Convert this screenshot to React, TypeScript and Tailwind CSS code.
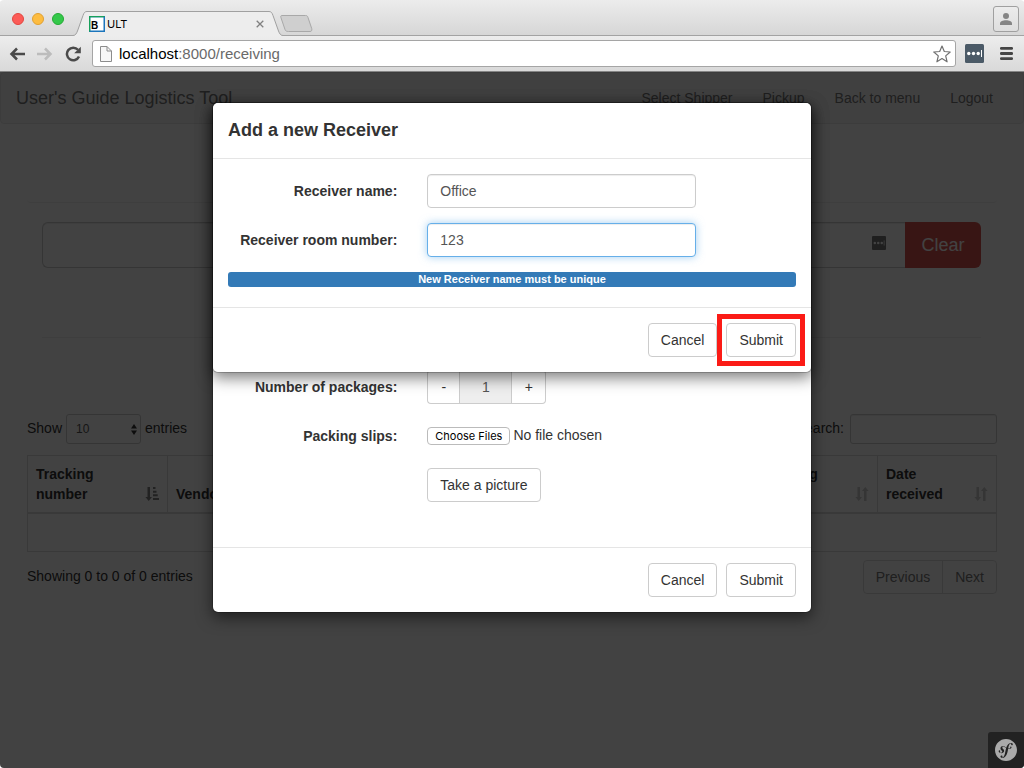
import type { ReactNode } from "react";
import { SiSymfony } from "react-icons/si";

const buttonClass =
  "h-[34px] rounded border border-[#ccc] bg-white px-3 text-sm leading-5 text-[#333] whitespace-nowrap";
const inputClass =
  "h-[34px] w-full rounded border bg-white px-3 text-sm text-[#555] outline-none";

function PasswordIcon({ className }: { className: string }) {
  return (
    <svg viewBox="0 0 19 19" className={className} aria-hidden="true">
      <rect width="19" height="19" rx="1.5" fill="currentColor" />
      <circle cx="3.8" cy="9.5" r="1.7" fill="#fff" />
      <circle cx="8.5" cy="9.5" r="1.7" fill="#fff" />
      <circle cx="13.2" cy="9.5" r="1.7" fill="#fff" />
      <path d="M16.500 6v7" stroke="#fff" strokeWidth="1" />
    </svg>
  );
}

function TabStrip() {
  return (
    <div className="flex h-9 items-end rounded-t bg-linear-to-b from-[#ececec] to-[#d6d6d6] shadow-[inset_0_-1px_0_#a3a3a3]">
      <div className="flex h-9 w-[73px] items-center gap-2 pl-3 pt-[2px]">
        <span className="size-3 rounded-full border border-[#e2463f] bg-[#fc5b57]" />
        <span className="size-3 rounded-full border border-[#e0a032] bg-[#fdbc40]" />
        <span className="size-3 rounded-full border border-[#24a934] bg-[#34c84a]" />
      </div>
      <div className="flex h-[25px] items-stretch">
        <svg viewBox="0 0 14 25" className="h-[25px] w-[14px]" aria-hidden="true">
          <path d="M0 24.500C2.500 24.500 3.500 22.500 4.500 20L10 4.500C11 1.500 12 .5 14 .5V25H0Z" fill="#ededed" />
          <path d="M0 24.500C2.500 24.500 3.500 22.500 4.500 20L10 4.500C11 1.500 12 .5 14 .5" fill="none" stroke="#a0a0a0" />
        </svg>
        <div className="flex w-[182px] items-center border-t border-[#a0a0a0] bg-[#ededed] pl-[2px]">
          <svg viewBox="0 0 16 16" className="size-4" aria-hidden="true">
            <rect width="16" height="16" fill="#1b75bc" />
            <path d="M0 0h16L14.500 1.500H1.500V14.500L0 16Z" fill="#17a05a" />
            <rect x="1.500" y="1.500" width="13" height="13" fill="#fff" />
            <text x="2" y="13" fontSize="10" fontWeight="bold" fontFamily="Liberation Sans, sans-serif">B</text>
          </svg>
          <span className="ml-[2px] font-[Inter,sans-serif] text-[11px] leading-4 text-black">ULT</span>
          <button aria-label="Close tab" className="ml-auto mr-px flex size-4 items-center justify-center">
            <svg viewBox="0 0 8 8" className="size-2" aria-hidden="true">
              <path d="M.7.7l6.600 6.600M7.300.7L.7 7.300" stroke="#808080" strokeWidth="1.300" />
            </svg>
          </button>
        </div>
        <svg viewBox="0 0 14 25" className="h-[25px] w-[14px]" aria-hidden="true">
          <path d="M0 .5C2 .5 3 1.500 4 4.500L9.500 20C10.500 22.500 11.500 24.500 14 24.500V25H0Z" fill="#ededed" />
          <path d="M0 .5C2 .5 3 1.500 4 4.500L9.500 20C10.500 22.500 11.500 24.500 14 24.500" fill="none" stroke="#a0a0a0" />
        </svg>
      </div>
      <button aria-label="New tab" className="-ml-[3px] mb-1">
        <svg viewBox="0 0 33 17" className="block h-[17px] w-[33px]" aria-hidden="true">
          <path d="M2 .5H25.500C27 .5 27.500 1 28 2.500L31.700 13.500C32.200 15.500 31.500 16.500 30 16.500H8.500C6.500 16.500 5.500 16 5 14.500L.9 2.500C.5 1 .8.5 2 .5Z" fill="#cfcfcf" stroke="#a8a8a8" />
        </svg>
      </button>
      <button
        aria-label="Profile"
        className="mb-1 ml-auto mr-[5px] flex size-[26px] items-center justify-center rounded-[3px] border border-[#a0a0a0] bg-linear-to-b from-[#ececec] to-[#dedede]"
      >
        <svg viewBox="0 0 12 12" className="size-3" fill="#858585" aria-hidden="true">
          <circle cx="6" cy="3" r="3" />
          <path d="M0 12V10.500C0 8.500 3 7.300 6 7.300S12 8.500 12 10.500V12Z" />
        </svg>
      </button>
    </div>
  );
}

function Toolbar() {
  return (
    <div className="flex h-9 items-center border-b border-[#858585] bg-linear-to-b from-[#ededed] to-[#d9d9d9] pl-[9px] pr-[10px]">
      <button aria-label="Back" className="size-4">
        <svg viewBox="0 0 16 16" className="size-4" fill="none" stroke="#4a4a4a" strokeWidth="2.500" aria-hidden="true">
          <path d="M16 8H3M8 2.500L2.500 8L8 13.500" />
        </svg>
      </button>
      <button aria-label="Forward" className="ml-3 size-4">
        <svg viewBox="0 0 16 16" className="size-4" fill="none" stroke="#bcbcbc" strokeWidth="2.500" aria-hidden="true">
          <path d="M0 8H13M8 2.500L13.500 8L8 13.500" />
        </svg>
      </button>
      <button aria-label="Reload" className="ml-3 size-4">
        <svg viewBox="0 0 16 16" className="size-4" aria-hidden="true">
          <path d="M13 3.800A6.300 6.300 0 1 0 14 10.500" fill="none" stroke="#4a4a4a" strokeWidth="2.500" />
          <path d="M15.800.8V7.200H9.200Z" fill="#4a4a4a" />
        </svg>
      </button>
      <div className="ml-[11px] flex h-[27px] flex-1 items-center rounded-[3px] border border-[#a5a5a5] bg-white pl-[7px] pr-1">
        <svg viewBox="0 0 12 16" className="h-4 w-3" fill="#f7f7f7" stroke="#8c8c8c" aria-hidden="true">
          <path d="M.5.5H7L11.500 5V15.500H.5Z" />
          <path d="M7 .5V5H11.500" fill="none" />
        </svg>
        <p className="ml-[7px] flex-1 text-[15px] leading-5 text-[#6a6a6a]">
          <span className="text-black">localhost</span>:8000/receiving
        </p>
        <button aria-label="Bookmark" className="size-[18px]">
          <svg viewBox="0 0 18 18" className="size-[18px]" fill="none" stroke="#707070" strokeWidth="1.200" strokeLinejoin="round" aria-hidden="true">
            <path d="M9 1L11.300 6.500L17.200 7L12.700 10.900L14.100 16.800L9 13.600L3.900 16.800L5.300 10.900L.8 7L6.700 6.500Z" />
          </svg>
        </button>
      </div>
      <button aria-label="Password manager" className="ml-[9px] size-[19px]">
        <PasswordIcon className="size-[19px] text-[#4b5a67]" />
      </button>
      <button aria-label="Menu" className="ml-4 h-[13px] w-[14px]">
        <svg viewBox="0 0 14 13" className="block h-[13px] w-[14px]" fill="#454545" aria-hidden="true">
          <rect y="0" width="13" height="2.800" rx="1.200" />
          <rect y="5.100" width="13" height="2.800" rx="1.200" />
          <rect y="10.200" width="13" height="2.800" rx="1.200" />
        </svg>
      </button>
    </div>
  );
}

function SortIcon() {
  return (
    <svg viewBox="0 0 14 14" className="size-[14px] shrink-0 text-[#333] opacity-25" fill="currentColor" aria-hidden="true">
      <path d="M2.500 0H5V10H7L3.700 14L.4 10H2.500Z" />
      <path d="M9 14H11.500V4H13.600L10.300 0L7 4H9Z" />
    </svg>
  );
}

function SortedIcon() {
  return (
    <svg viewBox="0 0 14 14" className="size-[14px] shrink-0 text-[#333] opacity-60" fill="currentColor" aria-hidden="true">
      <path d="M2.500 0H5V10H7L3.700 14L.4 10H2.500Z" />
      <path d="M8 0H10.500V2H8ZM8 3.700H11.500V5.700H8ZM8 7.300H12.700V9.300H8ZM8 11H14V13H8Z" />
    </svg>
  );
}

function HeaderCell({ children, icon, className }: { children?: ReactNode; icon?: ReactNode; className: string }) {
  return (
    <th scope="col" className={`border border-b-2 border-[#ddd] p-2 text-left align-bottom font-bold ${className}`}>
      <div className="flex items-end justify-between">
        <span>{children}</span>
        <span className="pb-[3px]">{icon}</span>
      </div>
    </th>
  );
}

function ReceivingPage() {
  return (
    <div>
      <nav className="flex h-[52px] items-center justify-between rounded border border-[#e7e7e7] bg-[#f8f8f8] px-[15px] text-[#777]">
        <a href="#" className="text-lg leading-5">User's Guide Logistics Tool</a>
        <ul className="flex">
          {["Select Shipper", "Pickup", "Back to menu", "Logout"].map((label) => (
            <li key={label}>
              <a href="#" className="px-[15px]">{label}</a>
            </li>
          ))}
        </ul>
      </nav>
      <div className="px-[27px]">
        <div className="h-[79px] rounded-b border-b border-[#eee]" />
        <div className="pl-[15px] pr-4 pt-[19px]">
          <div className="flex h-[46px]">
            <div className="flex flex-1 items-center rounded-l-md border border-r-0 border-[#ccc] pr-[19px] shadow-[inset_0_1px_1px_rgba(0,0,0,0.075)]">
              <input aria-label="Tracking number" className="h-full min-w-0 flex-1 px-4 outline-none" />
              <PasswordIcon className="mb-1 size-[14px] text-[#777]" />
            </div>
            <button className="w-[76px] rounded-r-md bg-[#d9534f] text-lg text-white">Clear</button>
          </div>
          <hr className="mt-[69px] border-[#eee]" />
        </div>
        <div className="mt-[76px] flex items-center justify-between">
          <label className="flex items-start leading-7">
            Show
            <span className="relative mx-1">
              <select className="block h-[30px] w-[75px] appearance-none rounded-[3px] border border-[#ccc] bg-white px-[9px] text-xs text-[#555]">
                <option>10</option>
              </select>
              <svg viewBox="0 0 6 11" className="absolute right-[4px] top-[10px] h-[11px] w-[6px]" fill="#333" aria-hidden="true">
                <path d="M3 0L6 4.500H0ZM3 11L0 6.500H6Z" />
              </svg>
            </span>
            entries
          </label>
          <label className="flex items-start gap-[6px] leading-7">
            Search:
            <input className="h-[30px] w-[147px] rounded-[3px] border border-[#ccc] px-2 shadow-[inset_0_1px_1px_rgba(0,0,0,0.075)]" />
          </label>
        </div>
        <table className="mt-[11px] w-full table-fixed border-collapse border border-[#ddd] leading-5">
          <thead>
            <tr>
              <HeaderCell className="w-[140px]" icon={<SortedIcon />}>Tracking<br />number</HeaderCell>
              <HeaderCell className="w-[140px]" icon={<SortIcon />}>Vendor</HeaderCell>
              <HeaderCell className="" />
              <HeaderCell className="w-[122px]" icon={<SortIcon />}>Packing<br />slip</HeaderCell>
              <HeaderCell className="w-[119px]" icon={<SortIcon />}>Date<br />received</HeaderCell>
            </tr>
          </thead>
          <tbody>
            <tr>
              <td colSpan={5} className="h-[38px] border border-[#ddd]" />
            </tr>
          </tbody>
        </table>
        <div className="mt-2 flex items-start justify-between">
          <p className="leading-8">Showing 0 to 0 of 0 entries</p>
          <div className="flex h-[34px] rounded border border-[#ddd] text-[#777]">
            <button className="border-r border-[#ddd] px-3">Previous</button>
            <button className="px-3">Next</button>
          </div>
        </div>
      </div>
    </div>
  );
}

function FormRow({ label, htmlFor, children }: { label?: string; htmlFor?: string; children: ReactNode }) {
  return (
    <div className="grid min-h-[34px] grid-cols-12">
      <div className="col-span-4 px-[15px] pt-[7px] text-right">
        {label && <label htmlFor={htmlFor} className="font-bold">{label}</label>}
      </div>
      <div className="col-span-6 px-[15px]">{children}</div>
    </div>
  );
}

function PackageDialog() {
  return (
    <section className="col-start-1 row-start-1 w-[600px] rounded-md border border-black/20 bg-white bg-clip-padding shadow-[0_5px_15px_rgba(0,0,0,0.5)]">
      <div className="flex flex-col gap-[15px] pb-[45px] pt-[267px]">
        <FormRow label="Number of packages:" htmlFor="packages">
          <div className="flex">
            <button className="h-[34px] w-8 rounded-l border border-r-0 border-[#ccc]">-</button>
            <input
              id="packages"
              readOnly
              value="1"
              className="h-[34px] w-[53px] border border-[#ccc] bg-[#eee] text-center text-[#555] outline-none"
            />
            <button className="h-[34px] w-[34px] rounded-r border border-l-0 border-[#ccc]">+</button>
          </div>
        </FormRow>
        <FormRow label="Packing slips:" htmlFor="slips">
          <input
            id="slips"
            type="file"
            multiple
            className="mt-[6px] block w-full text-sm file:mr-[3px] file:h-[18px] file:rounded file:border file:border-solid file:border-[#bbb] file:bg-white file:px-[7px] file:font-[Inter,sans-serif] file:text-[11px] file:leading-4 file:text-black"
          />
        </FormRow>
        <FormRow>
          <button className={buttonClass}>Take a picture</button>
        </FormRow>
      </div>
      <footer className="flex justify-end gap-[9px] border-t border-[#e5e5e5] p-[15px]">
        <button className={buttonClass}>Cancel</button>
        <button className={buttonClass}>Submit</button>
      </footer>
    </section>
  );
}

function ReceiverDialog() {
  return (
    <section
      role="dialog"
      aria-labelledby="receiver-title"
      className="z-10 col-start-1 row-start-1 w-[600px] rounded-md border border-black/20 bg-white bg-clip-padding shadow-[0_5px_15px_rgba(0,0,0,0.5)]"
    >
      <header className="border-b border-[#e5e5e5] p-[15px]">
        <h4 id="receiver-title" className="text-lg leading-[25px] font-bold">Add a new Receiver</h4>
      </header>
      <div className="flex flex-col gap-[15px] pb-5 pt-[15px]">
        <FormRow label="Receiver name:" htmlFor="receiver-name">
          <input
            id="receiver-name"
            defaultValue="Office"
            className={`${inputClass} border-[#ccc] shadow-[inset_0_1px_1px_rgba(0,0,0,0.075)]`}
          />
        </FormRow>
        <FormRow label="Receiver room number:" htmlFor="receiver-room">
          <input
            id="receiver-room"
            defaultValue="123"
            className={`${inputClass} border-[#66afe9] shadow-[inset_0_1px_1px_rgba(0,0,0,0.075),0_0_8px_rgba(102,175,233,0.6)]`}
          />
        </FormRow>
        <p className="mx-[15px] rounded-[3px] bg-[#337ab7] text-center text-[11px] leading-[15px] font-bold text-white">
          New Receiver name must be unique
        </p>
      </div>
      <footer className="flex justify-end gap-[9px] border-t border-[#e5e5e5] p-[15px]">
        <button className={buttonClass}>Cancel</button>
        <div className="relative">
          <button className={buttonClass}>Submit</button>
          <span className="pointer-events-none absolute -inset-[9px] border-5 border-[#fb1b16]" />
        </div>
      </footer>
    </section>
  );
}

export default function App() {
  return (
    <div className="flex min-h-screen flex-col bg-white font-['Liberation_Sans',Arial,sans-serif] text-sm leading-5 text-[#333]">
      <TabStrip />
      <Toolbar />
      <main className="relative flex-1">
        <ReceivingPage />
        <div className="absolute inset-0 grid grid-cols-1 items-start justify-items-center rounded-b bg-black/74 pt-[30px]">
          <PackageDialog />
          <ReceiverDialog />
        </div>
        <button
          aria-label="Symfony toolbar"
          className="absolute bottom-0 right-0 flex size-9 items-center justify-center rounded-tl-[3px] rounded-br bg-[#222] text-[#aaa]"
        >
          <SiSymfony size={22} />
        </button>
      </main>
    </div>
  );
}
